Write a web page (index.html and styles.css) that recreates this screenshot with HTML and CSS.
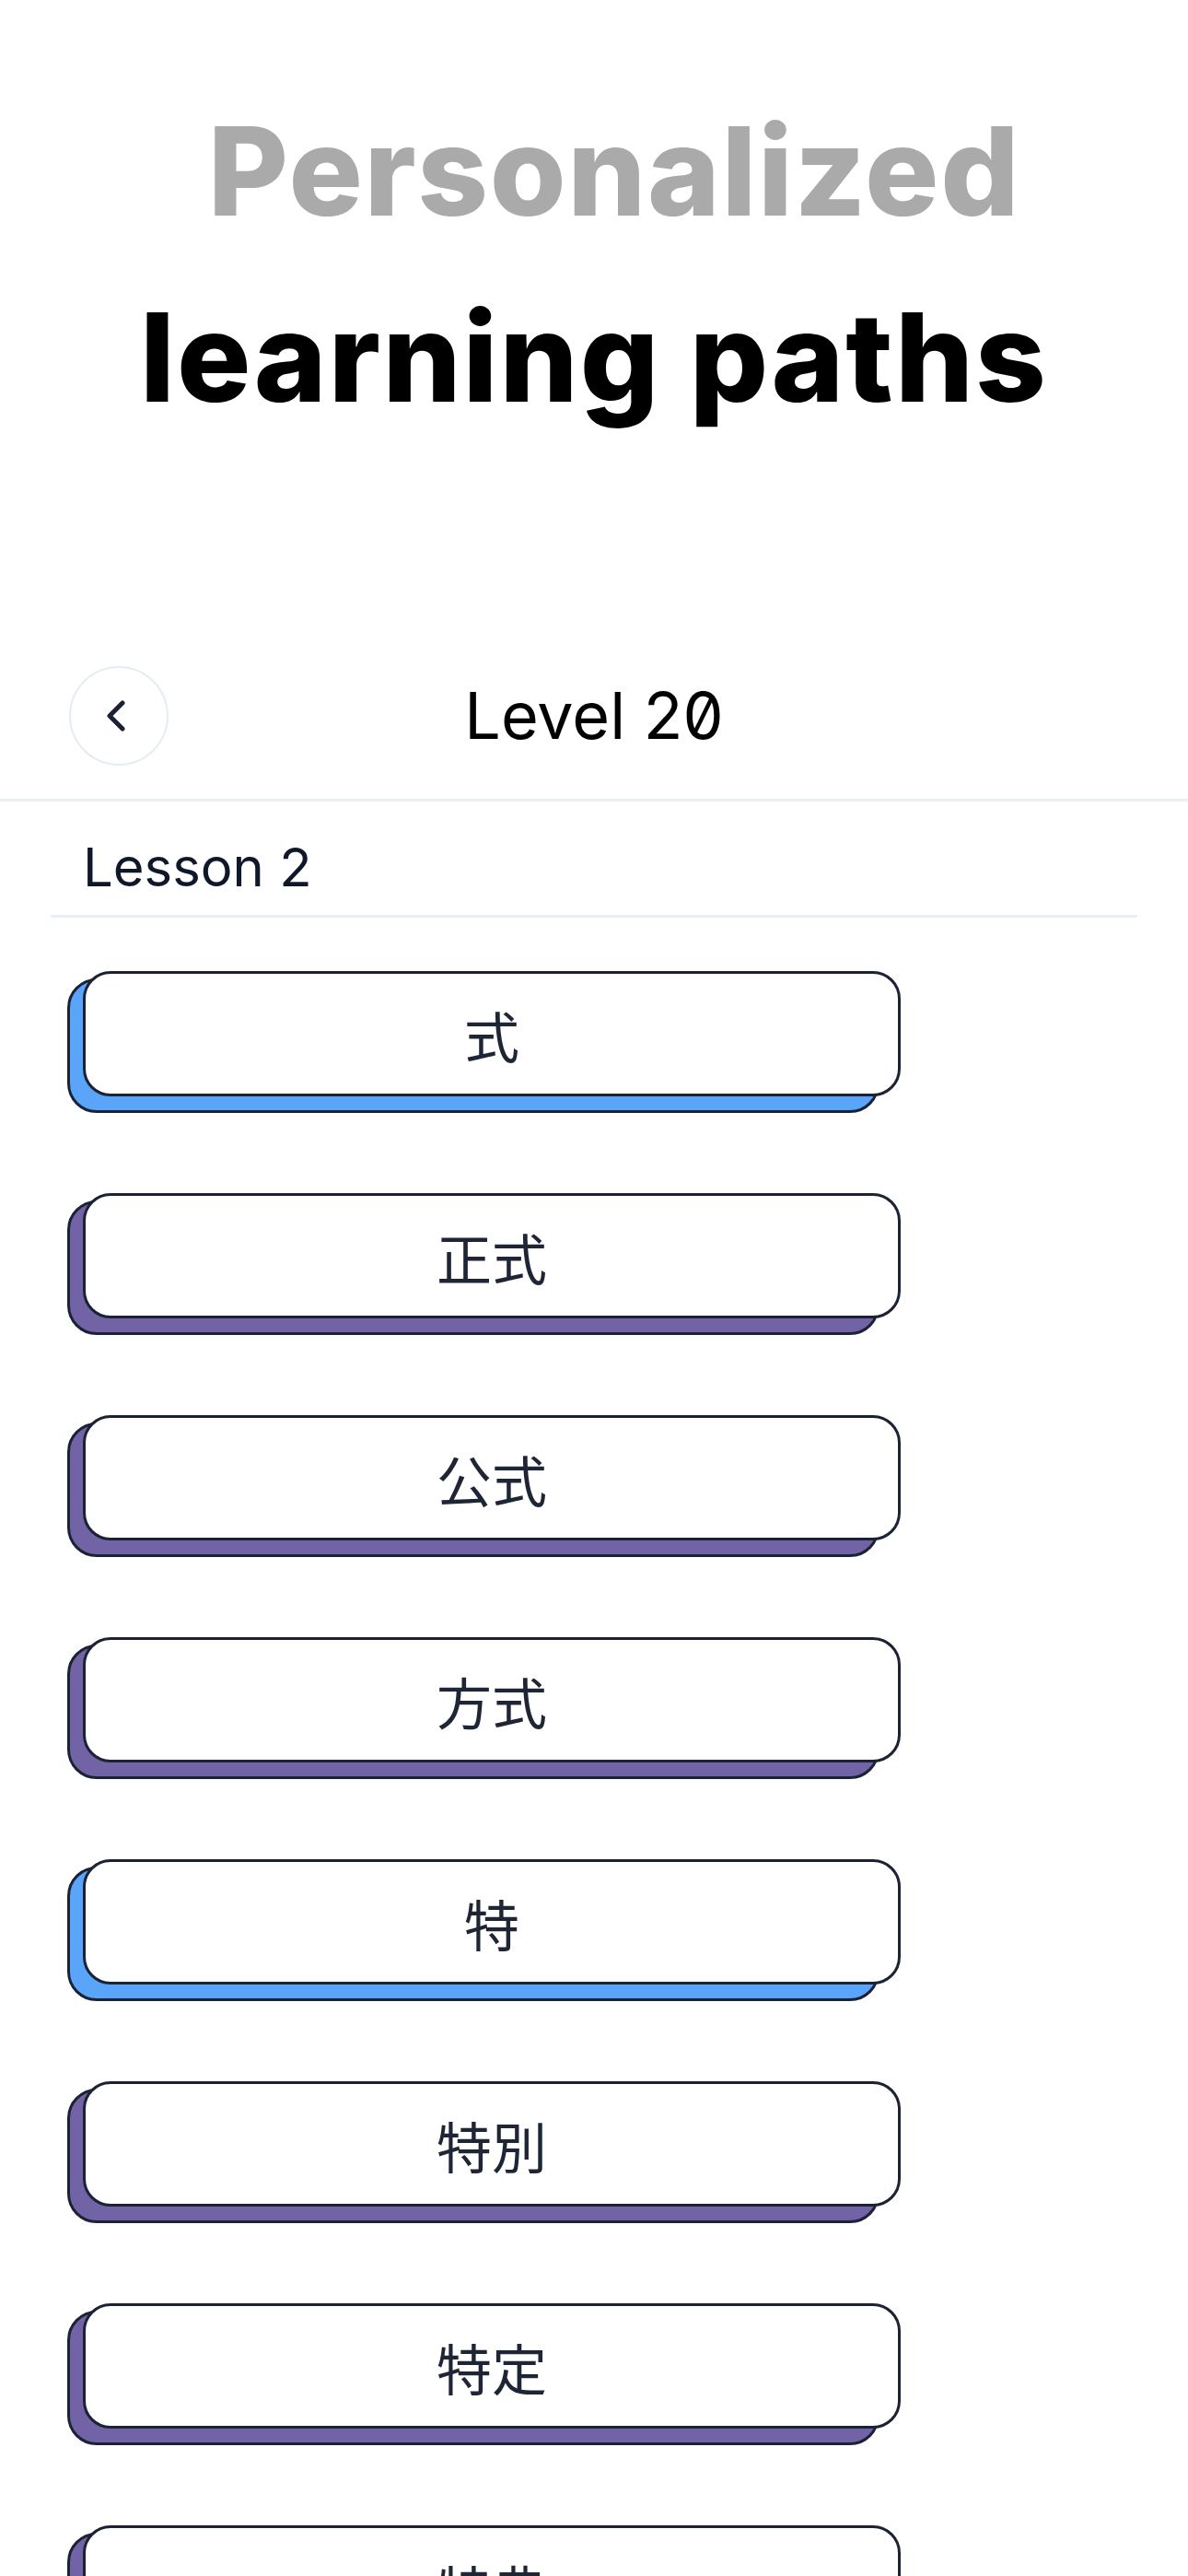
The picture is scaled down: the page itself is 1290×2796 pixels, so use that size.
FILE: index.html
```html
<!DOCTYPE html>
<html lang="en">
<head>
<meta charset="utf-8">
<title>Personalized learning paths</title>
<link rel="stylesheet" href="styles.css">
</head>
<body>
<div class="page">
  <h1 class="hero">
    <span class="hero-muted">Personalized</span>
    <span class="hero-strong">learning paths</span>
  </h1>

  <header class="topbar">
    <button class="back" aria-label="Back">
      <svg viewBox="0 0 40 40" width="40" height="40" aria-hidden="true">
        <path d="M27 6 L13 20 L27 34" fill="none" stroke="#1a2233" stroke-width="5" stroke-linecap="round" stroke-linejoin="round"/>
      </svg>
    </button>
    <div class="level">Level 20</div>
    <div class="spacer"></div>
  </header>

  <section class="lesson">
    <div class="lesson-title">Lesson 2</div>
    <ul class="cards">
      <li class="card blue"><div class="face">式</div></li>
      <li class="card purple"><div class="face">正式</div></li>
      <li class="card purple"><div class="face">公式</div></li>
      <li class="card purple"><div class="face">方式</div></li>
      <li class="card blue"><div class="face">特</div></li>
      <li class="card purple"><div class="face">特別</div></li>
      <li class="card purple"><div class="face">特定</div></li>
      <li class="card purple"><div class="face">特典</div></li>
    </ul>
  </section>
</div>
</body>
</html>
```

FILE: styles.css
```css
html, body {
  margin: 0;
  padding: 0;
  background: #ffffff;
}

body {
  font-family: Inter, "Noto Sans", "Liberation Sans", sans-serif;
  width: 1290px;
  height: 2796px;
  overflow: hidden;
}

.page {
  display: flex;
  flex-direction: column;
}

.hero {
  margin: 0;
  padding: 84px 0 0;
  display: flex;
  flex-direction: column;
  align-items: center;
  font-size: 134px;
  font-weight: 800;
  line-height: 202px;
  letter-spacing: 2px;
}

.hero-muted {
  color: #aaaaaa;
  padding-left: 44px;
  letter-spacing: 1.6px;
}

.hero-strong {
  color: #000000;
}

.topbar {
  margin-top: 235px;
  padding: 0 75px 36px;
  display: grid;
  grid-template-columns: 1fr auto 1fr;
  align-items: center;
  border-bottom: 3px solid #e9eff6;
}

.back {
  width: 108px;
  height: 108px;
  border-radius: 50%;
  border: 2.5px solid #e6ecf4;
  background: #ffffff;
  padding: 0;
  display: flex;
  align-items: center;
  justify-content: center;
  box-sizing: border-box;
}

.back svg {
  width: 40px;
  height: 40px;
  display: block;
  margin-left: -6px;
}

.level {
  font-size: 70px;
  font-weight: 400;
  color: #000000;
  line-height: 80px;
  font-feature-settings: "zero" 1;
}

.lesson {
  padding: 0 55px;
  display: flex;
  flex-direction: column;
}

.lesson-title {
  margin-top: 36px;
  padding: 0 35px 17px;
  font-size: 58px;
  line-height: 70px;
  color: #0f172a;
  border-bottom: 3px solid #e9eff6;
}

.cards {
  list-style: none;
  margin: 0;
  padding: 58px 0 0 35px;
  display: flex;
  flex-direction: column;
  gap: 105px;
}

.card {
  position: relative;
  isolation: isolate;
  width: 888px;
  height: 136px;
}

.card::before {
  content: "";
  position: absolute;
  left: -17px;
  right: 23px;
  top: 8px;
  bottom: -18px;
  border: 3px solid #1a2233;
  border-radius: 32px;
  z-index: -1;
}

.card.blue::before {
  background: #5aa4fa;
}

.card.purple::before {
  background: #7262a6;
}

.face {
  box-sizing: border-box;
  height: 100%;
  background: #ffffff;
  border: 3px solid #1a2233;
  border-radius: 30px;
  display: flex;
  align-items: center;
  justify-content: center;
  font-family: "Noto Sans CJK JP", "Noto Sans CJK SC", sans-serif;
  font-size: 60px;
  font-weight: 400;
  color: #1e2535;
}
```
